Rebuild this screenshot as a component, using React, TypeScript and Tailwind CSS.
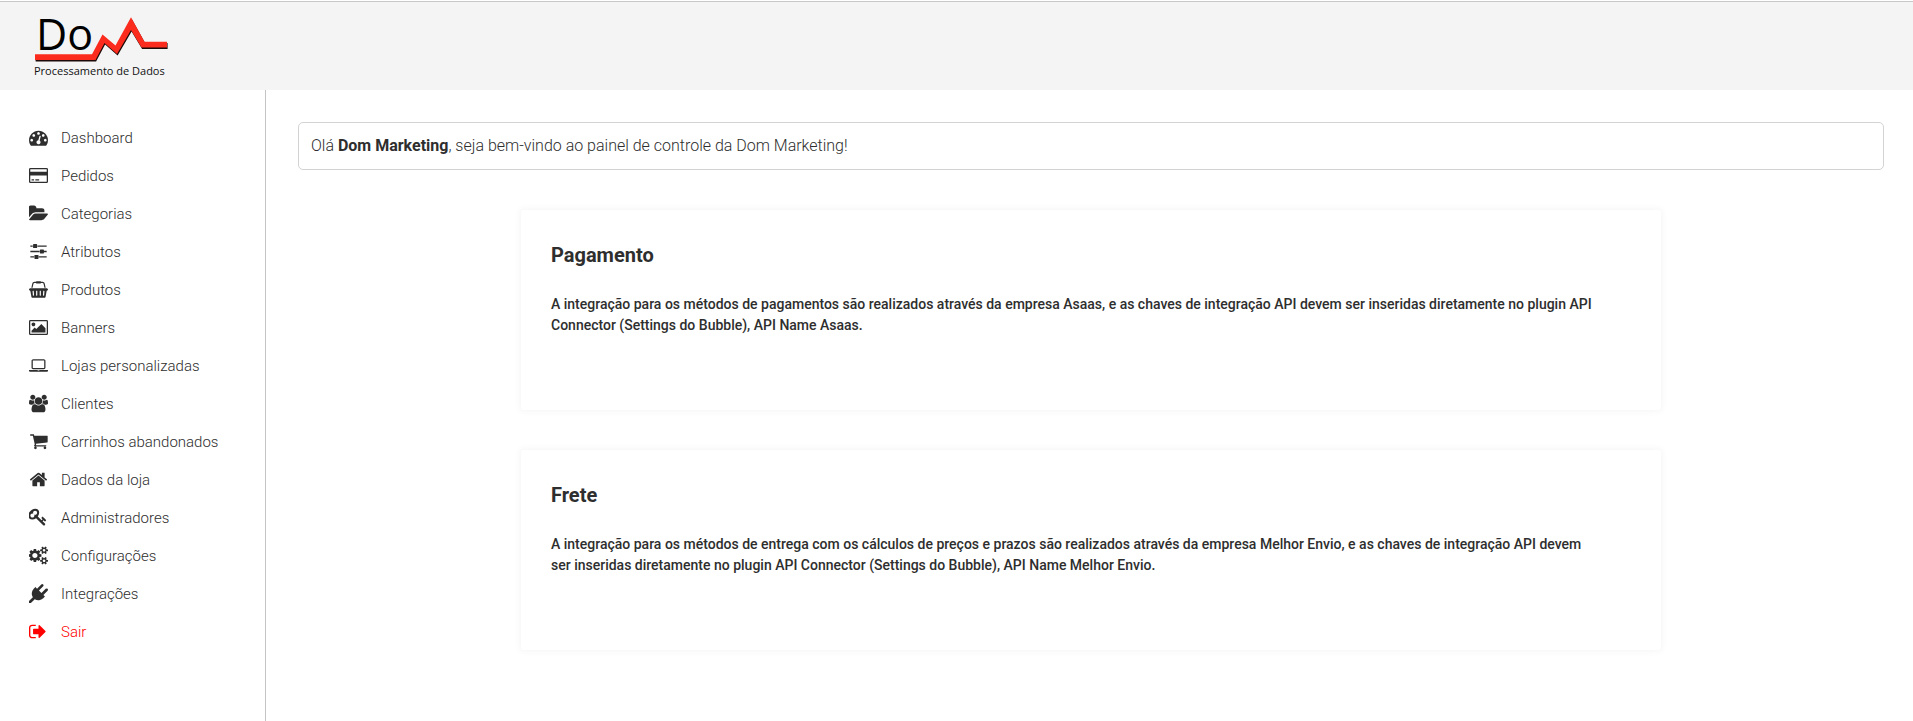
type Icon = { box: string; path: string };

const icons: Record<string, Icon> = {
  dashboard: {
    box: "0 0 1792 1792",
    path: "M384 1152q0-53-37.5-90.5t-90.5-37.5-90.5 37.5-37.5 90.5 37.5 90.5 90.5 37.5 90.5-37.5 37.5-90.5zm192-448q0-53-37.5-90.5t-90.5-37.5-90.5 37.5-37.5 90.5 37.5 90.5 90.5 37.5 90.5-37.5 37.5-90.5zm428 481l101-382q6-26-7.5-48.5t-38.5-29.5-48 6.5-30 39.5l-101 382q-60 5-107 43.5t-63 98.5q-20 77 20 146t117 89 146-20 89-117q16-60-6-117t-72-91zm660-33q0-53-37.5-90.5t-90.5-37.5-90.5 37.5-37.5 90.5 37.5 90.5 90.5 37.5 90.5-37.5 37.5-90.5zm-640-640q0-53-37.5-90.5t-90.5-37.5-90.5 37.5-37.5 90.5 37.5 90.5 90.5 37.5 90.5-37.5 37.5-90.5zm448 192q0-53-37.5-90.5t-90.5-37.5-90.5 37.5-37.5 90.5 37.5 90.5 90.5 37.5 90.5-37.5 37.5-90.5zm320 448q0 261-141 483-19 29-54 29h-1402q-35 0-54-29-141-221-141-483 0-182 71-348t191-286 286-191 348-71 348 71 286 191 191 286 71 348z",
  },
  card: {
    box: "0 0 1920 1792",
    path: "M1760 128q66 0 113 47t47 113v1216q0 66-47 113t-113 47h-1600q-66 0-113-47t-47-113v-1216q0-66 47-113t113-47h1600zm-1600 128q-13 0-22.5 9.5t-9.5 22.5v224h1664v-224q0-13-9.5-22.5t-22.5-9.5h-1600zm1600 1280q13 0 22.5-9.5t9.5-22.5v-608h-1664v608q0 13 9.5 22.5t22.5 9.5h1600zm-1504-128v-128h256v128h-256zm384 0v-128h384v128h-384z",
  },
  folder: {
    box: "0 0 1815 1792",
    path: "M1815 952q0 31-31 66l-336 396q-43 51-120.5 86.5t-143.5 35.5h-1088q-34 0-60.5-13t-26.5-43q0-31 31-66l336-396q43-51 120.5-86.5t143.5-35.5h1088q34 0 60.5 13t26.5 43zm-343-344v160h-832q-94 0-197 47.5t-164 119.5l-337 396-5 6q0-4-.5-12.5t-.5-12.5v-960q0-92 66-158t158-66h320q92 0 158 66t66 158v32h544q92 0 158 66t66 158z",
  },
  sliders: {
    box: "-96 0 1728 1792",
    path: "M352 1344v128h-352v-128h352zm352-128q26 0 45 19t19 45v256q0 26-19 45t-45 19h-256q-26 0-45-19t-19-45v-256q0-26 19-45t45-19h256zm160-384v128h-864v-128h864zm-640-512v128h-224v-128h224zm1312 1024v128h-736v-128h736zm-960-1152q26 0 45 19t19 45v256q0 26-19 45t-45 19h-256q-26 0-45-19t-19-45v-256q0-26 19-45t45-19h256zm640 512q26 0 45 19t19 45v256q0 26-19 45t-45 19h-256q-26 0-45-19t-19-45v-256q0-26 19-45t45-19h256zm320 128v128h-288v-128h288zm0-512v128h-864v-128h864z",
  },
  basket: {
    box: "0 0 2048 1792",
    path: "M1920 768q53 0 90.5 37.5t37.5 90.5-37.5 90.5-90.5 37.5h-15l-115 662q-8 46-44 76t-82 30h-1280q-46 0-82-30t-44-76l-115-662h-15q-53 0-90.5-37.5t-37.5-90.5 37.5-90.5 90.5-37.5h1792zm-1435 800q26-2 43.5-22.5t15.5-46.5l-32-416q-2-26-22.5-43.5t-46.5-15.5-43.5 22.5-15.5 46.5l32 416q2 25 20.5 42t43.5 17h5zm411-64v-416q0-26-19-45t-45-19-45 19-19 45v416q0 26 19 45t45 19 45-19 19-45zm384 0v-416q0-26-19-45t-45-19-45 19-19 45v416q0 26 19 45t45 19 45-19 19-45zm352 5l32-416q2-26-15.5-46.5t-43.5-22.5-46.5 15.5-22.5 43.5l-32 416q-2 26 15.5 46.5t43.5 22.5h5q25 0 43.5-17t20.5-42zm-1156-1217l-93 412h-132l101-441q19-88 89-143.5t160-55.5h167q0-26 19-45t45-19h384q26 0 45 19t19 45h167q90 0 160 55.5t89 143.5l101 441h-132l-93-412q-11-44-45.5-72t-79.5-28h-167q0 26-19 45t-45 19h-384q-26 0-45-19t-19-45h-167q-45 0-79.5 28t-45.5 72z",
  },
  picture: {
    box: "64 0 1920 1792",
    path: "M704 576q0 80-56 136t-136 56-136-56-56-136 56-136 136-56 136 56 56 136zm1024 384v448h-1408v-192l320-320 160 160 512-512zm96-704h-1600q-13 0-22.5 9.5t-9.5 22.5v1216q0 13 9.5 22.5t22.5 9.5h1600q13 0 22.5-9.5t9.5-22.5v-1216q0-13-9.5-22.5t-22.5-9.5zm160 32v1216q0 66-47 113t-113 47h-1600q-66 0-113-47t-47-113v-1216q0-66 47-113t113-47h1600q66 0 113 47t47 113z",
  },
  laptop: {
    box: "0 0 1920 1792",
    path: "M416 1280q-66 0-113-47t-47-113v-704q0-66 47-113t113-47h1088q66 0 113 47t47 113v704q0 66-47 113t-113 47h-1088zm-32-864v704q0 13 9.5 22.5t22.5 9.5h1088q13 0 22.5-9.5t9.5-22.5v-704q0-13-9.5-22.5t-22.5-9.5h-1088q-13 0-22.5 9.5t-9.5 22.5zm1376 928h160v96q0 40-47 68t-113 28h-1600q-66 0-113-28t-47-68v-96h1760zm-720 96q16 0 16-16t-16-16h-160q-16 0-16 16t16 16h160z",
  },
  users: {
    box: "0 0 1920 1792",
    path: "M593 896q-162 5-265 128h-134q-82 0-138-40.5t-56-118.5q0-353 124-353 6 0 43.5 21t97.5 42.5 119 21.5q67 0 133-23-5 37-5 66 0 139 81 256zm1071 637q0 120-73 189.5t-194 69.5h-874q-121 0-194-69.5t-73-189.5q0-53 3.5-103.5t14-109 26.5-108.5 43-97.5 62-81 85.5-53.5 111.5-20q10 0 43 21.5t73 48 107 48 135 21.5 135-21.5 107-48 73-48 43-21.5q61 0 111.5 20t85.5 53.5 62 81 43 97.5 26.5 108.5 14 109 3.5 103.5zm-1024-1277q0 106-75 181t-181 75-181-75-75-181 75-181 181-75 181 75 75 181zm704 384q0 159-112.5 271.5t-271.5 112.5-271.5-112.5-112.5-271.5 112.5-271.5 271.5-112.5 271.5 112.5 112.5 271.5zm576 225q0 78-56 118.5t-138 40.5h-134q-103-123-265-128 81-117 81-256 0-29-5-66 66 23 133 23 59 0 119-21.5t97.5-42.5 43.5-21q124 0 124 353zm-128-609q0 106-75 181t-181 75-181-75-75-181 75-181 181-75 181 75 75 181z",
  },
  cart: {
    box: "-32 40 1792 1792",
    path: "M704 1536q0 52-38 90t-90 38-90-38-38-90 38-90 90-38 90 38 38 90zm896 0q0 52-38 90t-90 38-90-38-38-90 38-90 90-38 90 38 38 90zm128-1088v512q0 24-16.5 42.5t-40.5 21.5l-1044 122q13 60 13 70 0 16-24 64h920q26 0 45 19t19 45-19 45-45 19h-1024q-26 0-45-19t-19-45q0-11 8-31.5t16-36 21.5-40 15.5-29.5l-177-823h-204q-26 0-45-19t-19-45 19-45 45-19h256q16 0 28.5 6.5t19.5 15.5 13 24.5 8 26 5.5 29.5 4.5 26h1201q26 0 45 19t19 45z",
  },
  home: {
    box: "0 0 1792 1792",
    path: "M1472 992v480q0 26-19 45t-45 19h-384v-384h-256v384h-384q-26 0-45-19t-19-45v-480q0-1 .5-3t.5-3l575-474 575 474q1 2 1 6zm223-69l-62 74q-8 9-21 11h-3q-13 0-21-7l-692-577-692 577q-12 8-24 7-13-2-21-11l-62-74q-8-10-7-23.5t11-21.5l719-599q32-26 76-26t76 26l244 204v-195q0-14 9-23t23-9h192q14 0 23 9t9 23v408l219 182q10 8 11 21.5t-7 23.5z",
  },
  key: {
    box: "64 64 1792 1792",
    path: "M832 512q0-80-56-136t-136-56-136 56-56 136q0 42 19 83-41-19-83-19-80 0-136 56t-56 136 56 136 136 56 136-56 56-136q0-42-19-83 41 19 83 19 80 0 136-56t56-136zm851 704q0 17-49 66t-66 49q-9 0-28.5-16t-36.5-33-38.5-40-24.5-26l-96 96 220 220q28 28 28 68 0 42-39 81t-81 39q-40 0-68-28l-671-671q-176 131-365 131-163 0-265.5-102.5t-102.5-265.5q0-160 95-313t248-248 313-95q163 0 265.5 102.5t102.5 265.5q0 189-131 365l355 355 96-96q-3-3-26-24.5t-40-38.5-33-36.5-16-28.5q0-17 49-66t66-49q13 0 23 10 6 6 46 44.5t82 79.5 86.5 86 73 78 28.5 41z",
  },
  cogs: {
    box: "0 0 1856 1792",
    path: "M832 896q0-106-75-181t-181-75-181 75-75 181 75 181 181 75 181-75 75-181zm768 512q0-52-38-90t-90-38-90 38-38 90q0 53 37.5 90.5t90.5 37.5 90.5-37.5 37.5-90.5zm0-1024q0-52-38-90t-90-38-90 38-38 90q0 53 37.5 90.5t90.5 37.5 90.5-37.5 37.5-90.5zm-384 421v185q0 10-7 19.5t-16 10.5l-155 24q-11 35-32 76 34 48 90 115 7 11 7 20 0 12-7 19-23 30-82.5 89.5t-78.5 59.5q-11 0-21-7l-115-90q-37 19-77 31-11 108-23 155-7 24-30 24h-186q-11 0-20-7.5t-10-17.5l-23-153q-34-10-75-31l-118 89q-7 7-20 7-11 0-21-8-144-133-144-160 0-9 7-19 10-14 41-53t47-61q-23-44-35-82l-152-24q-10-1-17-9.5t-7-19.5v-185q0-10 7-19.5t16-10.5l155-24q11-35 32-76-34-48-90-115-7-11-7-20 0-12 7-20 22-30 82-89t79-59q11 0 21 7l115 90q34-18 77-32 11-108 23-154 7-24 30-24h186q11 0 20 7.5t10 17.5l23 153q34 10 75 31l118-89q8-7 20-7 11 0 21 8 144 133 144 160 0 8-7 19-12 16-42 54t-45 60q23 48 34 82l152 23q10 2 17 10.5t7 19.5zm640 533v140q0 16-149 31-12 27-30 52 51 113 51 138 0 4-4 7-122 71-124 71-8 0-46-47t-52-68q-20 2-30 2t-30-2q-14 21-52 68t-46 47q-2 0-124-71-4-3-4-7 0-25 51-138-18-25-30-52-149-15-149-31v-140q0-16 149-31 13-29 30-52-51-113-51-138 0-4 4-7 4-2 35-20t59-34 30-16q8 0 46 46.5t52 67.5q20-2 30-2t30 2q51-71 92-112l6-2q4 0 124 70 4 3 4 7 0 25-51 138 17 23 30 52 149 15 149 31zm0-1024v140q0 16-149 31-12 27-30 52 51 113 51 138 0 4-4 7-122 71-124 71-8 0-46-47t-52-68q-20 2-30 2t-30-2q-14 21-52 68t-46 47q-2 0-124-71-4-3-4-7 0-25 51-138-18-25-30-52-149-15-149-31v-140q0-16 149-31 13-29 30-52-51-113-51-138 0-4 4-7 4-2 35-20t59-34 30-16q8 0 46 46.5t52 67.5q20-2 30-2t30 2q51-71 92-112l6-2q4 0 124 70 4 3 4 7 0 25-51 138 17 23 30 52 149 15 149 31z",
  },
  plug: {
    box: "0 0 1792 1792",
    path: "M1755 453q37 38 37 90.5t-37 90.5l-401 400 150 150-160 160q-163 163-389.5 186.5t-411.5-100.5l-362 362h-181v-181l362-362q-124-185-100.5-411.5t186.5-389.5l160-160 150 150 400-401q38-37 91-37t90 37 37 90.5-37 90.5l-400 401 234 234 401-400q38-37 91-37t90 37z",
  },
  signOut: {
    box: "64 0 1792 1792",
    path: "M704 1440q0 4 1 20t.5 26.5-3 23.5-10 19.5-20.5 6.5h-320q-119 0-203.5-84.5t-84.5-203.5v-704q0-119 84.5-203.5t203.5-84.5h320q13 0 22.5 9.5t9.5 22.5q0 4 1 20t.5 26.5-3 23.5-10 19.5-20.5 6.5h-320q-66 0-113 47t-47 113v704q0 66 47 113t113 47h312l11.5 1 11.5 3 8 5.5 7 9 2 13.5zm928-544q0 26-19 45l-544 544q-19 19-45 19t-45-19-19-45v-288h-448q-26 0-45-19t-19-45v-384q0-26 19-45t45-19h448v-288q0-26 19-45t45-19 45 19l544 544q19 19 19 45z",
  },
};

const menu = [
  { label: "Dashboard", icon: icons.dashboard },
  { label: "Pedidos", icon: icons.card },
  { label: "Categorias", icon: icons.folder },
  { label: "Atributos", icon: icons.sliders },
  { label: "Produtos", icon: icons.basket },
  { label: "Banners", icon: icons.picture },
  { label: "Lojas personalizadas", icon: icons.laptop },
  { label: "Clientes", icon: icons.users },
  { label: "Carrinhos abandonados", icon: icons.cart },
  { label: "Dados da loja", icon: icons.home },
  { label: "Administradores", icon: icons.key },
  { label: "Configurações", icon: icons.cogs },
  { label: "Integrações", icon: icons.plug },
];

function MenuItem({ label, icon, danger = false }: { label: string; icon: Icon; danger?: boolean }) {
  return (
    <li>
      <a
        href="#"
        className={`flex h-[38px] items-center gap-[13px] pl-[29px] text-[15px] font-light ${danger ? "text-[#ff0000]" : "text-[#2e2e2e]"}`}
      >
        <svg className="mb-px size-[19px] shrink-0" viewBox={icon.box} fill="currentColor" aria-hidden="true">
          <path d={icon.path} />
        </svg>
        {label}
      </a>
    </li>
  );
}

function Logo() {
  const line =
    "0,40.3 57,40.3 67.5,20.5 80.5,31.5 96,3.3 109.5,27.7 132,27.7 132,33.5 106.5,33.5 96,16 82,40 69.5,29 60.5,46 0,46";
  return (
    <svg
      className="overflow-visible"
      width="140"
      height="68"
      viewBox="0 0 140 68"
      role="img"
      aria-label="Dom Processamento de Dados"
    >
      <text x="1" y="36" fontFamily="'Open Sans', sans-serif" fontSize="43" fill="#000">
        Do
      </text>
      <polygon points={line} fill="#1c0a08" transform="translate(0.6 1.4)" />
      <polygon points={line} fill="#fb2b1d" />
      <text x="-1" y="61" fontFamily="'Open Sans', sans-serif" fontSize="11" fill="#111">
        Processamento de Dados
      </text>
    </svg>
  );
}

function InfoCard({ title, text }: { title: string; text: string }) {
  return (
    <section className="min-h-[200px] rounded-[3px] bg-white px-[30px] pt-[31px] pb-8 shadow-[0_0_6px_2px_rgba(0,0,0,0.035)]">
      <h2 className="text-xl leading-7 font-bold">{title}</h2>
      <p className="mt-[25px] text-sm leading-[21px] font-medium">{text}</p>
    </section>
  );
}

export default function App() {
  return (
    <div className="flex min-h-screen flex-col bg-white font-['Roboto',sans-serif] text-[#2e2e2e]">
      <header className="mt-px flex h-[89px] items-start border-t border-[#c8c8c8] bg-[#f4f4f4] pt-3 pl-[35px]">
        <a href="#">
          <Logo />
        </a>
      </header>
      <div className="flex grow">
        <nav className="w-[266px] shrink-0 border-r border-[#c4c4c4] pt-[29px]">
          <ul>
            {menu.map((item) => (
              <MenuItem key={item.label} {...item} />
            ))}
            <MenuItem label="Sair" icon={icons.signOut} danger />
          </ul>
        </nav>
        <main className="min-w-0 grow pt-8 pr-[29px] pl-8">
          <p className="flex h-12 items-center rounded-[5px] border border-[#d3d3d3] px-3 text-base font-light">
            <span>
              Olá <b className="font-bold">Dom Marketing</b>, seja bem-vindo ao painel de controle da Dom Marketing!
            </span>
          </p>
          <div className="mx-auto mt-10 flex max-w-[1140px] flex-col gap-10">
            <InfoCard
              title="Pagamento"
              text="A integração para os métodos de pagamentos são realizados através da empresa Asaas, e as chaves de integração API devem ser inseridas diretamente no plugin API Connector (Settings do Bubble), API Name Asaas."
            />
            <InfoCard
              title="Frete"
              text={"A integração para os métodos de entrega com os cálculos de preços e prazos são realizados através da empresa Melhor Envio, e as chaves de integração API devem ser\u00a0inseridas diretamente no plugin API Connector (Settings do Bubble), API Name Melhor Envio."}
            />
          </div>
        </main>
      </div>
    </div>
  );
}
